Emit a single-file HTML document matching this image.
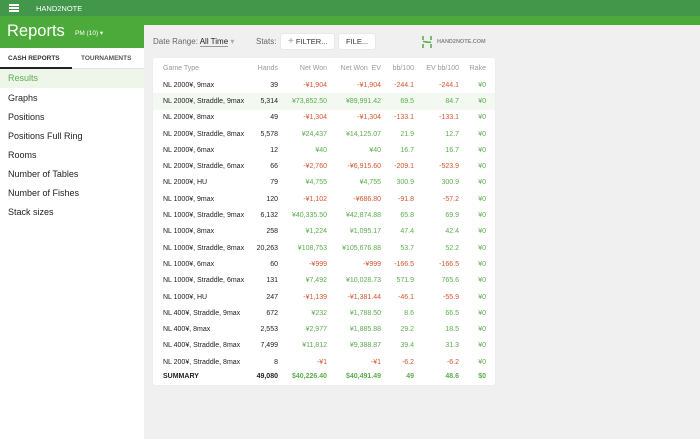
<!DOCTYPE html>
<html><head><meta charset="utf-8"><style>
*{margin:0;padding:0;box-sizing:border-box}
body{width:700px;height:439px;overflow:hidden;background:#f0f0f0;font-family:"Liberation Sans",sans-serif;position:relative}
.top{position:absolute;left:0;top:0;width:700px;height:16px;background:#43974a;color:#fff;font-size:8px}
.band{position:absolute;left:0;top:16px;width:700px;height:9px;background:#4caa3a}
.side{position:absolute;left:0;top:16px;width:144px;height:423px;background:#fff}
.sh{height:32px;background:#4caa3a;color:#fff;position:relative}
.tabs{height:21px;position:relative;font-size:6.5px;font-weight:bold;color:#333;border-bottom:1px solid #e4e4e4}
.item{position:absolute;left:8px;font-size:9px;color:#222}
.panel{position:absolute;left:144px;top:25px;width:556px;height:414px;background:#f0f0f0;border-radius:3px 0 0 0}
.tbl{position:absolute;left:153px;top:58px;width:342px;height:327px;background:#fff;border-radius:2px;box-shadow:0 0 1px rgba(0,0,0,.08)}
.r{position:absolute;left:0;width:342px;height:16.3px;font-size:7px;color:#222;display:flex;align-items:center}
.r span{display:block;text-align:right;white-space:nowrap}
.c1{width:95px;text-align:left!important;padding-left:10px}
.c2{width:30px}.c3{width:49px}.c4{width:54px}.c5{width:33px}.c6{width:45px}.c7{width:27px}
.g{color:#5aae4c}.d{color:#d5552e}
.h{color:#999}
.btn{position:absolute;background:#fff;border-radius:2px;font-size:7.5px;color:#333;height:15px;line-height:15px;padding:0 7px;box-shadow:0 0 1px rgba(0,0,0,.2)}
</style></head><body>
<div class="top"><div style="position:absolute;left:9px;top:4px;width:10px;height:1.5px;background:#fff;box-shadow:0 3px 0 #fff,0 6px 0 #fff"></div><div style="position:absolute;left:36px;top:4px;font-size:7.5px">HAND2NOTE</div></div>
<div class="band"></div>
<div class="side">
<div class="sh"><div style="position:absolute;left:7px;top:6px;font-size:16.5px">Reports</div><div style="position:absolute;left:75px;top:13px;font-size:6.5px">PM (10) ▾</div></div>
<div class="tabs"><div style="position:absolute;left:8px;top:7px">CASH REPORTS</div><div style="position:absolute;left:81px;top:7px;color:#555">TOURNAMENTS</div><div style="position:absolute;left:0;top:19px;width:72px;height:2px;background:#222"></div></div>
<div style="position:absolute;left:0;top:53px;width:144px;height:19px;background:#eef6ea"></div>
<div class="item" style="top:57px;color:#5aae4c">Results</div>
<div class="item" style="top:77px">Graphs</div>
<div class="item" style="top:96px">Positions</div>
<div class="item" style="top:115px">Positions Full Ring</div>
<div class="item" style="top:134px">Rooms</div>
<div class="item" style="top:153px">Number of Tables</div>
<div class="item" style="top:172px">Number of Fishes</div>
<div class="item" style="top:191px">Stack sizes</div>
</div>
<div class="panel"></div>
<div style="position:absolute;left:153px;top:37px;font-size:8px;color:#666">Date Range: <span style="color:#222;border-bottom:1px solid #999">All Time</span> <span style="color:#aaa">▾</span></div>
<div style="position:absolute;left:256px;top:37px;font-size:8px;color:#666">Stats:</div>
<div class="btn" style="left:281px;top:34px"><span style="color:#999;font-size:10px">+</span> FILTER...</div>
<div class="btn" style="left:339px;top:34px">FILE...</div>
<svg style="position:absolute;left:421px;top:35px" width="12" height="14" viewBox="0 0 12 14"><path d="M2 1v4M2 9v4M10 1v4M10 9v4M2 6.5c3 0 5 1.5 8 0.5" stroke="#5aae4c" stroke-width="1.6" fill="none"/></svg>
<div style="position:absolute;left:437px;top:39px;font-size:5.5px;font-weight:bold;color:#888">HAND2NOTE.COM</div>
<div class="tbl">
<div class="r h" style="top:2px;height:16px"><span class="c1">Game Type</span><span class="c2">Hands</span><span class="c3">Net Won</span><span class="c4">Net Won &nbsp;EV</span><span class="c5">bb/100</span><span class="c6">EV bb/100</span><span class="c7">Rake</span></div>
<div class="r" style="top:19px"><span class="c1">NL 2000¥, 9max</span><span class="c2">39</span><span class="c3 d">-¥1,904</span><span class="c4 d">-¥1,904</span><span class="c5 d">-244.1</span><span class="c6 d">-244.1</span><span class="c7 g">¥0</span></div>
<div class="r" style="top:35.3px;background:#f3f9f1"><span class="c1">NL 2000¥, Straddle, 9max</span><span class="c2">5,314</span><span class="c3 g">¥73,852.50</span><span class="c4 g">¥89,991.42</span><span class="c5 g">69.5</span><span class="c6 g">84.7</span><span class="c7 g">¥0</span></div>
<div class="r" style="top:51.6px"><span class="c1">NL 2000¥, 8max</span><span class="c2">49</span><span class="c3 d">-¥1,304</span><span class="c4 d">-¥1,304</span><span class="c5 d">-133.1</span><span class="c6 d">-133.1</span><span class="c7 g">¥0</span></div>
<div class="r" style="top:67.9px"><span class="c1">NL 2000¥, Straddle, 8max</span><span class="c2">5,578</span><span class="c3 g">¥24,437</span><span class="c4 g">¥14,125.07</span><span class="c5 g">21.9</span><span class="c6 g">12.7</span><span class="c7 g">¥0</span></div>
<div class="r" style="top:84.2px"><span class="c1">NL 2000¥, 6max</span><span class="c2">12</span><span class="c3 g">¥40</span><span class="c4 g">¥40</span><span class="c5 g">16.7</span><span class="c6 g">16.7</span><span class="c7 g">¥0</span></div>
<div class="r" style="top:100.5px"><span class="c1">NL 2000¥, Straddle, 6max</span><span class="c2">66</span><span class="c3 d">-¥2,760</span><span class="c4 d">-¥6,915.60</span><span class="c5 d">-209.1</span><span class="c6 d">-523.9</span><span class="c7 g">¥0</span></div>
<div class="r" style="top:116.8px"><span class="c1">NL 2000¥, HU</span><span class="c2">79</span><span class="c3 g">¥4,755</span><span class="c4 g">¥4,755</span><span class="c5 g">300.9</span><span class="c6 g">300.9</span><span class="c7 g">¥0</span></div>
<div class="r" style="top:133.1px"><span class="c1">NL 1000¥, 9max</span><span class="c2">120</span><span class="c3 d">-¥1,102</span><span class="c4 d">-¥686.80</span><span class="c5 d">-91.8</span><span class="c6 d">-57.2</span><span class="c7 g">¥0</span></div>
<div class="r" style="top:149.4px"><span class="c1">NL 1000¥, Straddle, 9max</span><span class="c2">6,132</span><span class="c3 g">¥40,335.50</span><span class="c4 g">¥42,874.88</span><span class="c5 g">65.8</span><span class="c6 g">69.9</span><span class="c7 g">¥0</span></div>
<div class="r" style="top:165.7px"><span class="c1">NL 1000¥, 8max</span><span class="c2">258</span><span class="c3 g">¥1,224</span><span class="c4 g">¥1,095.17</span><span class="c5 g">47.4</span><span class="c6 g">42.4</span><span class="c7 g">¥0</span></div>
<div class="r" style="top:182px"><span class="c1">NL 1000¥, Straddle, 8max</span><span class="c2">20,263</span><span class="c3 g">¥108,753</span><span class="c4 g">¥105,676.88</span><span class="c5 g">53.7</span><span class="c6 g">52.2</span><span class="c7 g">¥0</span></div>
<div class="r" style="top:198.3px"><span class="c1">NL 1000¥, 6max</span><span class="c2">60</span><span class="c3 d">-¥999</span><span class="c4 d">-¥999</span><span class="c5 d">-166.5</span><span class="c6 d">-166.5</span><span class="c7 g">¥0</span></div>
<div class="r" style="top:214.6px"><span class="c1">NL 1000¥, Straddle, 6max</span><span class="c2">131</span><span class="c3 g">¥7,492</span><span class="c4 g">¥10,028.73</span><span class="c5 g">571.9</span><span class="c6 g">765.6</span><span class="c7 g">¥0</span></div>
<div class="r" style="top:230.9px"><span class="c1">NL 1000¥, HU</span><span class="c2">247</span><span class="c3 d">-¥1,139</span><span class="c4 d">-¥1,381.44</span><span class="c5 d">-46.1</span><span class="c6 d">-55.9</span><span class="c7 g">¥0</span></div>
<div class="r" style="top:247.2px"><span class="c1">NL 400¥, Straddle, 9max</span><span class="c2">672</span><span class="c3 g">¥232</span><span class="c4 g">¥1,788.50</span><span class="c5 g">8.6</span><span class="c6 g">66.5</span><span class="c7 g">¥0</span></div>
<div class="r" style="top:263.5px"><span class="c1">NL 400¥, 8max</span><span class="c2">2,553</span><span class="c3 g">¥2,977</span><span class="c4 g">¥1,885.88</span><span class="c5 g">29.2</span><span class="c6 g">18.5</span><span class="c7 g">¥0</span></div>
<div class="r" style="top:279.8px"><span class="c1">NL 400¥, Straddle, 8max</span><span class="c2">7,499</span><span class="c3 g">¥11,812</span><span class="c4 g">¥9,388.87</span><span class="c5 g">39.4</span><span class="c6 g">31.3</span><span class="c7 g">¥0</span></div>
<div class="r" style="top:296.1px"><span class="c1">NL 200¥, Straddle, 8max</span><span class="c2">8</span><span class="c3 d">-¥1</span><span class="c4 d">-¥1</span><span class="c5 d">-6.2</span><span class="c6 d">-6.2</span><span class="c7 g">¥0</span></div>
<div class="r" style="top:310.5px;font-weight:bold"><span class="c1">SUMMARY</span><span class="c2">49,080</span><span class="c3 g">$40,226.40</span><span class="c4 g">$40,491.49</span><span class="c5 g">49</span><span class="c6 g">48.6</span><span class="c7 g">$0</span></div>
</div>
</body></html>
